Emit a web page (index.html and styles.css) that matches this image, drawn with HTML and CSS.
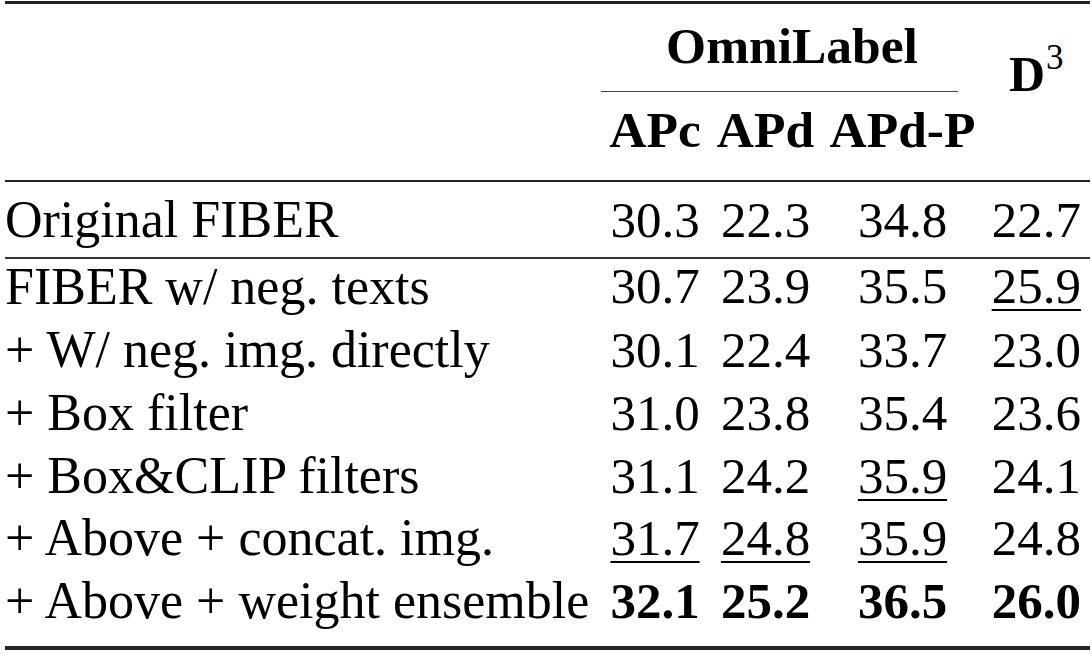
FILE: index.html
```html
<!DOCTYPE html>
<html>
<head>
<meta charset="utf-8">
<link rel="stylesheet" href="styles.css">
</head>
<body>
<table class="results">
  <colgroup>
    <col class="c-label">
    <col class="c-apc">
    <col class="c-apd">
    <col class="c-apdp">
    <col class="c-d3">
  </colgroup>
  <thead>
    <tr class="h1">
      <th class="label head-edge" rowspan="2"></th>
      <th class="group" colspan="3">
        <div class="group-title">OmniLabel</div>
        <div class="cmid"></div>
      </th>
      <th class="d3 head-edge" rowspan="2">D<sup>3</sup></th>
    </tr>
    <tr class="h2">
      <th>APc</th>
      <th>APd</th>
      <th>APd-P</th>
    </tr>
  </thead>
  <tbody>
    <tr class="r-orig">
      <td class="label">Original FIBER</td>
      <td>30.3</td><td>22.3</td><td>34.8</td><td>22.7</td>
    </tr>
    <tr class="r-first">
      <td class="label">FIBER w/ neg. texts</td>
      <td>30.7</td><td>23.9</td><td>35.5</td><td><span class="u">25.9</span></td>
    </tr>
    <tr>
      <td class="label">+ W/ neg. img. directly</td>
      <td>30.1</td><td>22.4</td><td>33.7</td><td>23.0</td>
    </tr>
    <tr>
      <td class="label">+ Box filter</td>
      <td>31.0</td><td>23.8</td><td>35.4</td><td>23.6</td>
    </tr>
    <tr>
      <td class="label">+ Box&amp;CLIP filters</td>
      <td>31.1</td><td>24.2</td><td><span class="u">35.9</span></td><td>24.1</td>
    </tr>
    <tr>
      <td class="label">+ Above + concat. img.</td>
      <td><span class="u">31.7</span></td><td><span class="u">24.8</span></td><td><span class="u">35.9</span></td><td>24.8</td>
    </tr>
    <tr class="r-last">
      <td class="label">+ Above + weight ensemble</td>
      <td class="b">32.1</td><td class="b">25.2</td><td class="b">36.5</td><td class="b">26.0</td>
    </tr>
  </tbody>
</table>
</body>
</html>
```

FILE: styles.css
```css
html, body {
  margin: 0;
  padding: 0;
  background: #ffffff;
}

body {
  font-family: "Liberation Serif", "Times New Roman", serif;
  font-size: 51px;
  color: #000;
}

.results {
  margin: 1px 0 0 5px;
  width: 1084.5px;
  table-layout: fixed;
  border-collapse: collapse;
  border-top: 3px solid #222;
  border-bottom: 4px solid #222;
}

.c-label { width: 596px; }
.c-apc { width: 108px; }
.c-apd { width: 113px; }
.c-apdp { width: 161px; }
.c-d3 { width: 106.5px; }

th, td {
  padding: 0;
  text-align: center;
  white-space: nowrap;
  vertical-align: top;
}

th {
  font-weight: bold;
  font-size: 51.5px;
}

.label {
  text-align: left;
  font-size: 52px;
}

/* header */
.h1 th {
  padding-top: 14px;
}

.head-edge {
  border-bottom: 2px solid #222;
}

.group-title {
  line-height: 56px;
}

.cmid {
  margin: 17px 25.5px 0 0;
  border-top: 1.5px solid #444;
}

.d3 {
  line-height: 56px;
  padding-top: 42px !important;
  font-size: 50px !important;
}

.d3 sup {
  font-size: 35px;
  font-weight: normal;
  line-height: 0;
  vertical-align: 22px;
  margin-left: 1px;
}

.h2 th {
  line-height: 56px;
  padding-top: 10px;
  padding-bottom: 21.5px;
  border-bottom: 2px solid #222;
}

/* body */
td {
  line-height: 62.6px;
}

.r-orig td {
  padding-top: 7.3px;
  padding-bottom: 6.1px;
  border-bottom: 2px solid #333;
}

.r-first td {
  line-height: 55px;
  padding-bottom: 4.9px;
}

.r-last td {
  padding-bottom: 14px;
}

.u {
  text-decoration: underline;
  text-decoration-thickness: 2px;
  text-underline-offset: 6px;
}

.b {
  font-weight: bold;
}
```
